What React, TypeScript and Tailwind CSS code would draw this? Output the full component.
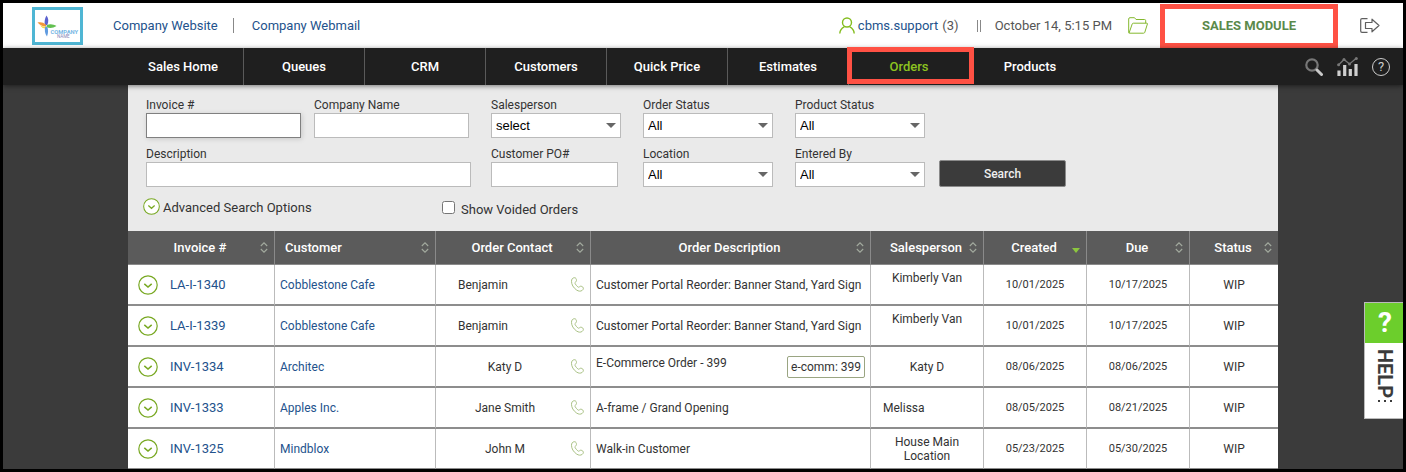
import type { ReactNode } from "react"

const navItems = ["Sales Home", "Queues", "CRM", "Customers", "Quick Price", "Estimates", "Orders", "Products"]

const columns = [
  { name: "Invoice #", width: "w-[147px]", sort: "both" },
  { name: "Customer", width: "w-[161px]", sort: "both" },
  { name: "Order Contact", width: "w-[155px]", sort: "both" },
  { name: "Order Description", width: "w-auto", sort: "both" },
  { name: "Salesperson", width: "w-[113px]", sort: "both" },
  { name: "Created", width: "w-[103px]", sort: "down" },
  { name: "Due", width: "w-[103px]", sort: "both" },
  { name: "Status", width: "w-[88px]", sort: "both" },
]

const orders = [
  { invoice: "LA-I-1340", customer: "Cobblestone Cafe", contact: "Benjamin", contactLeft: true, description: "Customer Portal Reorder: Banner Stand, Yard Sign", sales: "Kimberly Van", salesTop: true, created: "10/01/2025", due: "10/17/2025" },
  { invoice: "LA-I-1339", customer: "Cobblestone Cafe", contact: "Benjamin", contactLeft: true, description: "Customer Portal Reorder: Banner Stand, Yard Sign", sales: "Kimberly Van", salesTop: true, created: "10/01/2025", due: "10/17/2025" },
  { invoice: "INV-1334", customer: "Architec", contact: "Katy D", description: "E-Commerce Order - 399", tag: "e-comm: 399", sales: "Katy D", created: "08/06/2025", due: "08/06/2025" },
  { invoice: "INV-1333", customer: "Apples Inc.", contact: "Jane Smith", description: "A-frame / Grand Opening", sales: "Melissa", salesLeft: true, created: "08/05/2025", due: "08/21/2025" },
  { invoice: "INV-1325", customer: "Mindblox", contact: "John M", description: "Walk-in Customer", sales: "House Main Location", created: "05/23/2025", due: "05/30/2025" },
]

function Logo() {
  return (
    <svg viewBox="0 0 45 32" className="h-8 w-[45px]" role="img" aria-label="Company Name">
      <path d="M11.500 5.500c2.200 3 2.300 6 .8 9.500l-2.300.5c-1-3.500-.2-7 1.500-10z" fill="#5b62cf" />
      <path d="M2.500 12.500c3-.8 6-.3 8.500 2.200l.3 1.800c-3 .4-6-1-8.800-4z" fill="#f2953a" />
      <path d="M5 15c2 1.600 4 2 6.500 1.500l-.5 2c-2.500.2-4.600-1-6-3.500z" fill="#f3d643" />
      <path d="M21.500 16c-3-1.800-6.500-2.500-9.500-1l-.5 2.200c3.500 1.200 6.800.8 10-1.200z" fill="#62c050" />
      <path d="M12 26.500c1.200-3.500 1.500-6.500.3-9.500l-2-.5c-1 3.500-.5 7 1.700 10z" fill="#5f9be0" />
      <text x="15.500" y="23.500" fontSize="5.800" fontWeight="700" fill="#76b6e4" fontFamily="Roboto, sans-serif">COMPANY</text>
      <text x="22" y="27.500" fontSize="4.500" fill="#8586b5" fontFamily="Roboto, sans-serif">NAME</text>
    </svg>
  )
}

function UserIcon() {
  return (
    <svg viewBox="0 0 16 17" className="h-[17px] w-4" fill="none" stroke="#84bd1f" strokeWidth="1.400">
      <circle cx="8" cy="5.500" r="4.500" />
      <path d="M.8 16.500c.2-3.200 2-5.400 4.500-6.600M15.200 16.500c-.2-3.200-2-5.400-4.500-6.600" />
    </svg>
  )
}

function FolderIcon() {
  return (
    <svg viewBox="0 0 20 17" className="h-[17px] w-5" fill="none" stroke="#84b82f" strokeWidth="1">
      <path d="M.7 15V2Q.7.700 2 .7h4.500l1.500 1.800h8.500q1.200 0 1.200 1.200v2.500" />
      <path d="M1 16.200 4.200 7q.3-.8 1.200-.8h13.400q.8 0 .6.8l-2.600 8.300q-.3.900-1.200.9H1.500q-.8 0-.8-1.200" />
    </svg>
  )
}

function LogoutIcon() {
  return (
    <svg viewBox="0 0 20 15" className="h-[15px] w-5" fill="none" stroke="#5f5f5f" strokeWidth="1.200">
      <path d="M7.500.700H2Q.7.700.7 2v11q0 1.300 1.300 1.300h5.500" />
      <path d="M5.500 4.500h6.500V1.200l7 6.300-7 6.300v-3.300H5.500z" strokeLinejoin="round" />
    </svg>
  )
}

function SearchIcon() {
  return (
    <svg viewBox="0 0 18 18" className="h-[18px] w-[18px]" fill="none">
      <circle cx="7" cy="7" r="5.700" stroke="#777" strokeWidth="2.200" />
      <path d="m12 12 4.500 4.500" stroke="#c9c9c9" strokeWidth="3" strokeLinecap="round" />
    </svg>
  )
}

function ChartIcon() {
  return (
    <svg viewBox="0 0 21 19" className="h-[19px] w-[21px]" fill="none">
      <path d="M1.500 8 7 2.500 12.500 7 19 1.500" stroke="#777" strokeWidth="1.300" />
      <path d="M2 19v-5.500M7.700 19V8M13.300 19v-7M19 19V7" stroke="#cfcfcf" strokeWidth="3.200" />
      <g fill="#777">
        <circle cx="1.600" cy="7.800" r="1.500" />
        <circle cx="7" cy="2.500" r="1.500" />
        <circle cx="12.500" cy="7" r="1.500" />
        <circle cx="19.300" cy="1.600" r="1.500" />
      </g>
    </svg>
  )
}

function ExpandIcon({ className }: { className: string }) {
  return (
    <svg viewBox="0 0 20 20" className={className} fill="#fff" stroke="#78a822" strokeWidth="1.200">
      <circle cx="10" cy="10" r="9.200" />
      <path d="m6.300 8.900 3.700 3.200 3.700-3.200" fill="none" strokeWidth="1.500" />
    </svg>
  )
}

function PhoneIcon() {
  return (
    <svg viewBox="0 0 13 15" className="h-[15px] w-[13px]" fill="none" stroke="#a9c184" strokeWidth="1">
      <path d="M1.200 1.800C2.300.500 4.300.300 5 1.500c.7 1.300.7 2.700-.3 3.400-1 .7-.9 1.200-.3 2.200.7 1.100 1.500 2 2.400 2.700.7.600 1.100.600 1.800-.1.900-.9 2.200-.5 3.200.4 1 .9.600 2.400-.6 3.300-1.600 1.200-3.700.9-5.500-.3C2.300 10.800.500 7.500.500 4.300c0-1 .2-1.800.7-2.500z" />
    </svg>
  )
}

function SortIcon({ sort }: { sort: string }) {
  if (sort === "down") {
    return (
      <svg viewBox="0 0 8 11" className="h-[11px] w-2 shrink-0">
        <path d="M0 6h8l-4 5z" fill="#8cc63f" />
      </svg>
    )
  }
  return (
    <svg viewBox="0 0 8 11" className="h-[11px] w-2 shrink-0" fill="none" stroke="#a3ab9f" strokeWidth="1.100">
      <path d="M.8 4 4 .8 7.200 4M.8 7 4 10.200 7.200 7" />
    </svg>
  )
}

function Field({ id, label, className = "", children }: { id: string; label: string; className?: string; children: ReactNode }) {
  return (
    <div className={`flex flex-col ${className}`}>
      <label htmlFor={id} className="text-xs leading-[15px]">{label}</label>
      {children}
    </div>
  )
}

function SelectField({ id, label, value }: { id: string; label: string; value: string }) {
  return (
    <Field id={id} label={label}>
      <div className="relative w-[130px]">
        <select id={id} className="block h-[25px] w-full appearance-none border border-[#bbb] bg-white pl-1 font-['Liberation_Sans',sans-serif] text-[13px] text-black">
          <option>{value}</option>
        </select>
        <svg viewBox="0 0 10 5" className="pointer-events-none absolute top-2.5 right-[5px] h-[5px] w-2.5">
          <path d="M0 0h10L5 5z" fill="#666" />
        </svg>
      </div>
    </Field>
  )
}

function TopBar() {
  return (
    <header className="flex h-[45px] items-center bg-white text-[13px] text-[#555]">
      <a href="#home" className="ml-[29px] block border-3 border-[#4fb6d4]"><Logo /></a>
      <a href="#website" className="ml-[30px] text-[#23528c]">Company Website</a>
      <span className="mr-[18px] ml-[15px] h-[15px] w-px bg-[#888]" />
      <a href="#webmail" className="text-[#23528c]">Company Webmail</a>
      <div className="ml-auto flex items-center">
        <UserIcon />
        <a href="#account" className="ml-[3px] text-[#23528c]">cbms.support</a>
        <span className="ml-1">(3)</span>
        <span className="mr-3.5 ml-[18px] h-3 w-1 border-x border-[#888]" />
        <span>October 14, 5:15 PM</span>
        <button className="ml-4" aria-label="Files"><FolderIcon /></button>
        <button className="ml-3 h-[44px] w-[178px] self-start border-5 border-[#ff5144] font-bold text-[#5b8a4b]">SALES MODULE</button>
        <button className="mr-[23px] ml-[22px]" aria-label="Log out"><LogoutIcon /></button>
      </div>
    </header>
  )
}

function NavBar() {
  return (
    <nav className="relative z-10 flex h-[37px] bg-[#1f1f1f] pl-[120px] text-[13px] font-medium text-white shadow-[0_1px_5px_rgba(0,0,0,0.5)]">
      {navItems.map((item) => (
        <a
          key={item}
          href="#nav"
          className={`relative flex w-[121px] items-center justify-center border-r ${item === "Orders" || item === "Products" ? "border-transparent" : "border-[#5a5a5a]"} ${item === "Orders" ? "text-[#8cc220]" : ""}`}
        >
          {item}
          {item === "Orders" && <span className="absolute -top-px -right-[5px] bottom-px -left-0.5 border-5 border-[#ff5144]" />}
        </a>
      ))}
      <div className="mr-[13px] ml-auto flex items-center gap-3.5">
        <button aria-label="Find"><SearchIcon /></button>
        <button aria-label="Reports"><ChartIcon /></button>
        <button aria-label="Help" className="flex h-[18px] w-[18px] items-center justify-center rounded-full border border-[#ccc] text-[13px] font-normal text-[#ccc]">?</button>
      </div>
    </nav>
  )
}

function SearchForm() {
  const input = "h-[25px] border bg-white px-1"
  return (
    <form className="h-[146px] bg-[#eaeaea] pt-[13px] pl-[18px] text-[#333]">
      <div className="grid grid-cols-[168px_177px_152px_152px_144px_auto] gap-y-[9px]">
        <Field id="invoice" label="Invoice #">
          <input id="invoice" className={`${input} w-[155px] border-[#808080] shadow-[1px_1px_5px_rgba(0,0,0,0.15)]`} />
        </Field>
        <Field id="company" label="Company Name">
          <input id="company" className={`${input} w-[155px] border-[#bbb]`} />
        </Field>
        <SelectField id="salesperson" label="Salesperson" value="select" />
        <SelectField id="order-status" label="Order Status" value="All" />
        <SelectField id="product-status" label="Product Status" value="All" />
        <span />
        <Field id="description" label="Description" className="col-span-2">
          <input id="description" className={`${input} w-[325px] border-[#bbb]`} />
        </Field>
        <Field id="po" label="Customer PO#">
          <input id="po" className={`${input} w-[127px] border-[#bbb]`} />
        </Field>
        <SelectField id="location" label="Location" value="All" />
        <SelectField id="entered-by" label="Entered By" value="All" />
        <button type="button" className="h-[27px] w-[127px] self-end rounded-xs border border-[#8a8a8a] bg-[#3b3b3b] text-xs font-medium text-[#eee]">Search</button>
      </div>
      <div className="-ml-[3px] flex items-start pt-[11px] text-[13px] leading-5">
        <button type="button" className="flex w-[299px] items-start gap-[3px]">
          <ExpandIcon className="h-[17px] w-[17px]" />
          Advanced Search Options
        </button>
        <label className="flex items-start pt-0.5">
          <input type="checkbox" className="mt-px mr-1.5 h-[13px] w-[13px]" />
          Show Voided Orders
        </label>
      </div>
    </form>
  )
}

function OrdersTable() {
  const cell = "border-r border-[#bbb] p-0"
  return (
    <table className="w-full table-fixed border-separate border-spacing-0 bg-white text-xs text-[#333]">
      <thead>
        <tr className="h-[34px] bg-[#5b5b5b] text-[13px] text-white">
          {columns.map((column) => (
            <th key={column.name} className={`${column.width} border-r border-b border-[#8a8a8a] p-0 font-medium last:border-r-0`}>
              <div className="flex items-center pr-1.5">
                <span className={column.name === "Customer" ? "flex-1 pl-2.5 text-left" : "flex-1 pl-3"}>{column.name}</span>
                <SortIcon sort={column.sort} />
              </div>
            </th>
          ))}
        </tr>
      </thead>
      <tbody>
        {orders.map((order) => (
          <tr key={order.invoice} className="h-[41px] *:border-b-2 *:border-b-[#8d8d8d] last:h-10 last:*:border-b">
            <td className={cell}>
              <div className="flex items-center gap-3 pl-2.5 text-[13px]">
                <button aria-label="Expand order"><ExpandIcon className="block h-5 w-5" /></button>
                <a href="#order" className="text-[#23528c]">{order.invoice}</a>
              </div>
            </td>
            <td className={cell}><a href="#customer" className="pl-[5px] text-[#23528c]">{order.customer}</a></td>
            <td className={cell}>
              <div className="flex items-center pr-1.5">
                <span className={order.contactLeft ? "flex-1 pl-[22px]" : "flex-1 pl-[3px] text-center"}>{order.contact}</span>
                <PhoneIcon />
              </div>
            </td>
            <td className={cell}>
              <div className="flex items-center justify-between pr-[5px] pl-[5px]">
                <span className={order.tag ? "pb-2" : ""}>{order.description}</span>
                {order.tag && <span className="rounded-xs border border-[#9aa582] px-[3px] py-0.5">{order.tag}</span>}
              </div>
            </td>
            <td className={cell}>
              <div className={`px-3 leading-[14px] ${order.salesLeft ? "" : "text-center"} ${order.salesTop ? "pb-3.5" : ""}`}>
                {order.sales}
              </div>
            </td>
            <td className={`${cell} pt-0.5 text-center text-[11px]`}>{order.created}</td>
            <td className={`${cell} pt-0.5 text-center text-[11px]`}>{order.due}</td>
            <td className="p-0 text-center">WIP</td>
          </tr>
        ))}
      </tbody>
    </table>
  )
}

function HelpTab() {
  return (
    <button className="absolute top-[299px] right-0 w-[39px] border border-r-0 border-[#bbb] bg-white font-['Roboto',sans-serif]">
      <span className="flex h-10 items-center justify-center bg-[#6cce2c] pl-0.5 text-[28px] font-bold text-white">?</span>
      <span className="flex h-[75px] flex-col items-center pt-1.5 pl-0.5">
        <span className="text-xl leading-6 font-bold text-[#3b3b3b] [writing-mode:vertical-rl]">HELP</span>
        <svg viewBox="0 0 14 3" className="mt-0.5 h-[3px] w-3.5" fill="#3b3b3b">
          <path d="M0 0h2v2H0zM6 0h2v2H6zM12 0h2v2h-2z" />
        </svg>
      </span>
    </button>
  )
}

export default function App() {
  return (
    <div className="border-3 border-black bg-[#3b3b3b] font-['Roboto',sans-serif]">
      <div className="relative">
        <TopBar />
        <NavBar />
        <main className="mx-auto w-full max-w-[1150px]">
          <SearchForm />
          <OrdersTable />
        </main>
        <HelpTab />
      </div>
    </div>
  )
}
